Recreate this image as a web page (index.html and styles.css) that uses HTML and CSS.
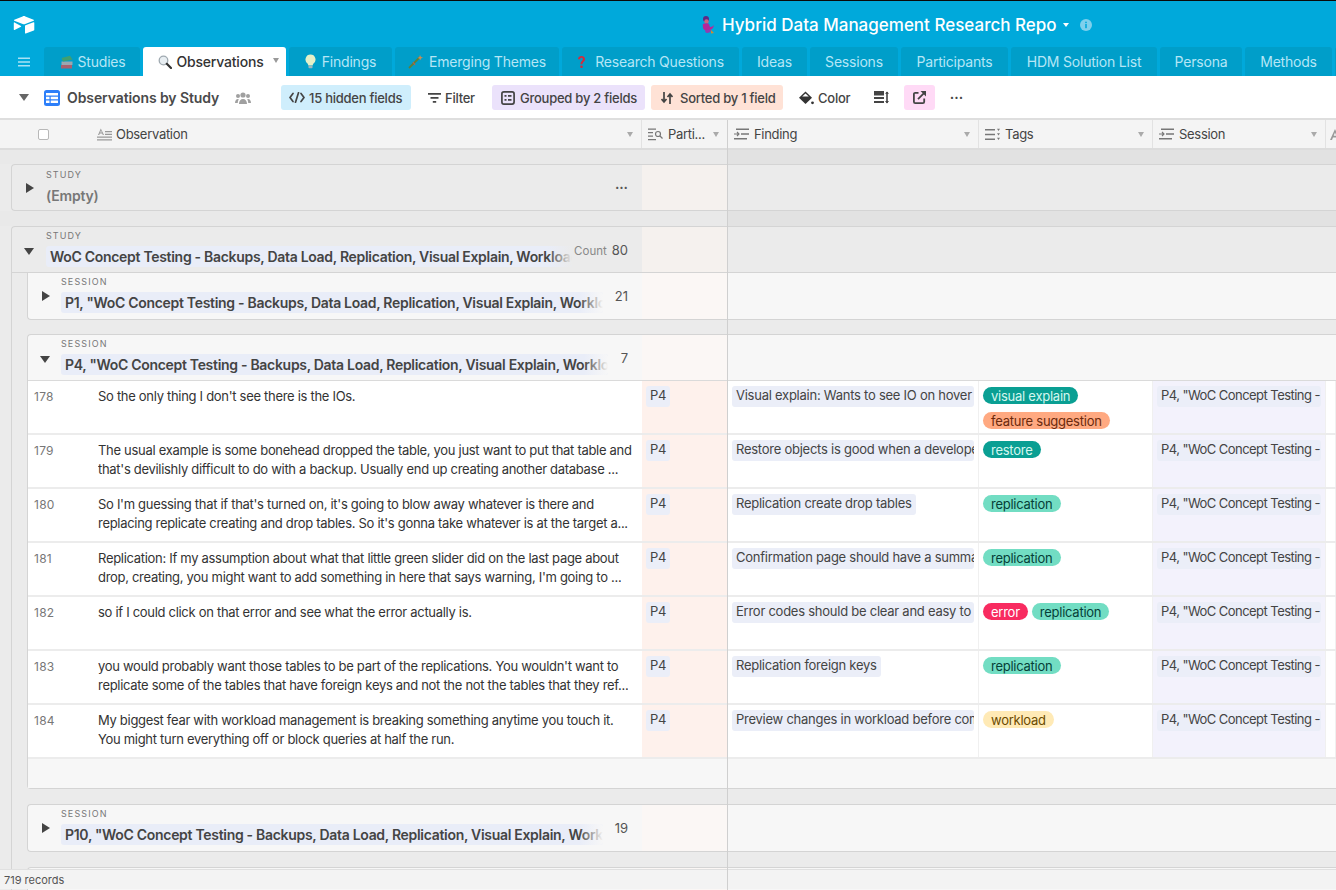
FILE: index.html
```html
<!DOCTYPE html>
<html lang="en">
<head>
<meta charset="utf-8">
<title>Hybrid Data Management Research Repo</title>
<link rel="stylesheet" href="styles.css">
</head>
<body>
<div class="app">
  <header class="topbar">
    <div class="brand">
      <svg class="logo" width="22" height="18" viewBox="0 0 22 18"><path d="M9.6.4 1.3 3.8c-.5.2-.5.8 0 1l8.4 3.3c.8.3 1.7.3 2.5 0l8.4-3.3c.5-.2.5-.8 0-1L12.300.4c-.9-.4-1.800-.4-2.700 0z" fill="#fff"/><path d="M12 10v7c0 .4.400.7.800.5l8-3.100c.3-.1.500-.4.500-.7v-7c0-.4-.400-.7-.800-.5l-8 3.100c-.3.100-.5.400-.5.700z" fill="#fff"/><path d="M.8 6.800v6.600c0 .4.400.6.700.5l6.500-3.200c.3-.2.200-.5 0-.6L1.500 6.400c-.3-.2-.7 0-.7.400z" fill="#fff"/></svg>
      <div class="base-title">
        <svg width="16" height="20" viewBox="0 0 16 20"><circle cx="6" cy="4" r="3" fill="#5b2a86"/><circle cx="6.500" cy="6.500" r="2.200" fill="#c9677f"/><path d="M3 9c2-1 5-1 6 0l1 3c2 0 3-1 4-2-.3 3-2.500 5-5 5H5C3 15 2.400 11 3 9z" fill="#b5279a"/><path d="M5 15h6c0 2-2 3-4 3-1.500 0-2-1.500-2-3z" fill="#8f3fb0"/><path d="M11 15l3 3-3 .5z" fill="#d08a2e"/></svg>
        <span class="base-name">Hybrid Data Management Research Repo</span>
        <span class="caret-white"></span>
        <svg class="info" width="12" height="12" viewBox="0 0 12 12"><circle cx="6" cy="6" r="6" fill="#7fd0ec"/><rect x="5.200" y="5" width="1.600" height="4.200" fill="#00a9db"/><rect x="5.200" y="2.700" width="1.600" height="1.500" fill="#00a9db"/></svg>
      </div>
    </div>
    <nav class="tabs">
      <div class="menu"><svg width="12" height="10" viewBox="0 0 12 10"><path d="M0 .5h12v1.600H0zM0 4.200h12v1.600H0zM0 7.900h12v1.600H0z" fill="#a8e2f5"/></svg></div>
      <div class="tab tab-books"><svg width="14" height="14" viewBox="0 0 14 14"><path d="M1 10h11v3.500H1z" fill="#a8606e"/><path d="M1.500 6.500h11V10h-11z" fill="#9aa7b0"/><path d="M1.500 3 10 .8l2.500 3.700-9.500 2z" fill="#3f9f72"/></svg>Studies</div>
      <div class="tab active"><svg width="14" height="14" viewBox="0 0 14 14"><circle cx="5.500" cy="5.500" r="4.300" fill="#e8eef2" stroke="#9fa9b0" stroke-width="1.300"/><path d="M8.800 8.800 13 13" stroke="#333" stroke-width="2.200" stroke-linecap="round"/></svg>Observations<span class="caret-tab"></span></div>
      <div class="tab"><svg width="11" height="15" viewBox="0 0 11 15"><path d="M5.500.5a5 5 0 0 0-3 9c.5.500.7 1.300.8 2h4.400c.1-.7.300-1.500.8-2a5 5 0 0 0-3-9z" fill="#e4f0c8"/><rect x="3.500" y="11.800" width="4" height="2.500" rx=".8" fill="#9fb6bf"/></svg>Findings</div>
      <div class="tab"><svg width="15" height="15" viewBox="0 0 15 15"><path d="M1 14 12 3" stroke="#5f7f3a" stroke-width="1.800"/><path d="M12 1l1 2 2 .5-2 1-.7 1.800-1-1.800-1.800-.5 1.800-1z" fill="#c98d54"/><path d="M5 8l2 3" stroke="#b8624b" stroke-width="1.200"/></svg>Emerging Themes</div>
      <div class="tab tab-question"><svg width="9" height="14" viewBox="0 0 9 14"><path d="M1 4.200C1 2 2.800 1 4.500 1S8 2.200 8 4.200c0 2.600-2.500 2.600-2.500 5H3.500c0-3.200 2.300-3.300 2.300-5 0-.9-.6-1.400-1.300-1.400s-1.300.5-1.300 1.400z" fill="#d8293a"/><circle cx="4.500" cy="11.800" r="1.300" fill="#d8293a"/></svg>Research Questions</div>
      <div class="tab">Ideas</div>
      <div class="tab">Sessions</div>
      <div class="tab">Participants</div>
      <div class="tab">HDM Solution List</div>
      <div class="tab">Persona</div>
      <div class="tab">Methods</div>
      <div class="tab"></div>
    </nav>
  </header>

  <section class="toolbar">
    <span class="tri-down tool-tri"></span>
    <svg class="grid-icon" width="16" height="16" viewBox="0 0 16 16"><rect width="16" height="16" rx="2.500" fill="#2d7ff9"/><path d="M2 3h12v2.500H2zM2 6.800h3.500v2.500H2zM6.700 6.800H14v2.500H6.700zM2 10.500h3.500V13H2zM6.700 10.500H14V13H6.700z" fill="#fff"/></svg>
    <span class="view-name">Observations by Study</span>
    <svg class="people" width="16" height="12" viewBox="0 0 16 12"><circle cx="8" cy="3" r="2.600" fill="#a0a0a0"/><circle cx="3" cy="4" r="2" fill="#a0a0a0"/><circle cx="13" cy="4" r="2" fill="#a0a0a0"/><path d="M4 12c0-3 1.500-5 4-5s4 2 4 5zM0 11c0-2 1-4 3-4l.800.300C3 8.500 2.800 10 2.800 11zM16 11c0-2-1-4-3-4l-.8.300c.8 1.200 1 2.700 1 3.700z" fill="#a0a0a0"/></svg>
    <div class="tool chip-blue"><svg width="16" height="11" viewBox="0 0 16 11"><path d="M4 1.500 1 5.500l3 4M12 1.500l3 4-3 4M9.500.7 6.500 10.300" fill="none" stroke="#444" stroke-width="1.700" stroke-linecap="round" stroke-linejoin="round"/></svg>15 hidden fields</div>
    <div class="tool tool-filter"><svg width="13" height="10" viewBox="0 0 13 10"><path d="M0 0h13v1.800H0zM2.500 4h8v1.800h-8zM4.800 8h3.400v1.800H4.800z" fill="#444"/></svg>Filter</div>
    <div class="tool chip-purple"><svg width="14" height="14" viewBox="0 0 14 14"><rect x=".9" y=".9" width="12.200" height="12.200" rx="2" fill="none" stroke="#444" stroke-width="1.700"/><path d="M3.500 4h2v1.700h-2zM7 4h3.500v1.700H7zM3.500 8h2v1.700h-2zM7 8h3.500v1.700H7z" fill="#444"/></svg>Grouped by 2 fields</div>
    <div class="tool chip-orange"><svg width="12" height="12" viewBox="0 0 12 12"><path d="M3 0v9M.5 7 3 10 5.500 7M9 12V3M6.500 5 9 2l2.500 3" fill="none" stroke="#444" stroke-width="1.700"/></svg>Sorted by 1 field</div>
    <div class="tool tool-color"><svg width="15" height="14" viewBox="0 0 15 14"><path d="M6.500.5 13 6.800 6.500 13 0 6.800z" fill="#333"/><path d="M3.200 5.600h6.600L6.500 2.400z" fill="#fff"/><circle cx="13.500" cy="11.800" r="1.400" fill="#333"/></svg>Color</div>
    <svg class="row-h" width="15" height="13" viewBox="0 0 15 13"><path d="M0 0h10v4.500H0zM0 6h10v2H0zM0 10h10v2H0z" fill="#444"/><path d="M13 1v11" stroke="#444" stroke-width="1.600"/><path d="M11 2.800 13 .5l2 2.300zM11 10l2 2.500 2-2.500z" fill="#444"/></svg>
    <div class="share"><svg width="13" height="13" viewBox="0 0 13 13"><path d="M5.500 1.800H2.300c-.8 0-1.400.6-1.400 1.400v7.500c0 .8.600 1.400 1.400 1.400h7.500c.8 0 1.400-.6 1.400-1.400V7.500" fill="none" stroke="#444" stroke-width="1.800"/><path d="M5 8.200 11 2.200" stroke="#444" stroke-width="1.800"/><path d="M7.500 0H13v5.500z" fill="#444"/></svg></div>
    <span class="more">•••</span>
  </section>

  <section class="table">
    <div class="col-head">
      <div class="hc hc-first">
        <span class="checkbox"></span>
        <svg class="hc-icon" width="15" height="13" viewBox="0 0 15 13"><path d="M3.800.5 1 7h1.200l.6-1.500h2.400L5.800 7H7zM3.200 4.400 4 2.300l.8 2.100zM8 3h7v1.300H8zM8 5.700h7V7H8zM0 8.500h15v1.300H0zM0 11.200h15v1.300H0z" fill="#999"/></svg>
        <span>Observation</span><span class="caret-grey"></span>
      </div>
      <div class="hc">
        <svg class="hc-icon" width="15" height="13" viewBox="0 0 15 13"><path d="M0 .5h8v1.300H0zM0 4h5v1.300H0zM0 7.500h5v1.300H0zM0 11h8v1.300H0z" fill="#777"/><circle cx="10" cy="6" r="2.500" fill="none" stroke="#777" stroke-width="1.200"/><path d="m12 8 2.500 2.500" stroke="#777" stroke-width="1.300"/></svg>
        <span>Parti...</span><span class="caret-grey"></span>
      </div>
      <div class="hc">
        <svg class="hc-icon" width="15" height="12" viewBox="0 0 15 12"><path d="M2 .5h13v1.400H2zM7 5.300h8v1.400H7zM0 10h13v1.400H0z" fill="#777"/><path d="M0 6h5M3 4l2 2-2 2" fill="none" stroke="#777" stroke-width="1.100"/></svg>
        <span>Finding</span><span class="caret-grey"></span>
      </div>
      <div class="hc">
        <svg class="hc-icon" width="15" height="13" viewBox="0 0 15 13"><path d="M0 1h10v1.400H0zM0 5.800h10v1.400H0zM0 10.600h10V12H0z" fill="#777"/><path d="M12 .7h3L13.500 3zM12 5.200h3L13.500 7.500zM12 9.800h3L13.500 12z" fill="#777"/></svg>
        <span>Tags</span><span class="caret-grey"></span>
      </div>
      <div class="hc">
        <svg class="hc-icon" width="15" height="12" viewBox="0 0 15 12"><path d="M2 .5h13v1.400H2zM7 5.300h8v1.400H7zM0 10h13v1.400H0z" fill="#777"/><path d="M0 6h5M3 4l2 2-2 2" fill="none" stroke="#777" stroke-width="1.100"/></svg>
        <span>Session</span><span class="caret-grey"></span>
      </div>
      <div class="hc hc-last"><svg width="10" height="11" viewBox="0 0 10 11"><path d="M5 0 0 11h2l1-2.500h4L8 11h2zM3.700 6.700 5 3.500l1.300 3.200z" fill="#999"/></svg></div>
    </div>

    <div class="body">
      <div class="gap gap-outer"></div>

      <div class="group study closed">
        <div class="row head">
          <div class="lead">
            <span class="tri-right"></span>
            <div class="head-text">
              <div class="label">STUDY</div>
              <div class="empty">(Empty)</div>
            </div>
            <span class="dots">•••</span>
          </div>
          <div class="c tint"></div><div class="c"></div><div class="c"></div><div class="c"></div><div class="c"></div>
        </div>
      </div>

      <div class="gap gap-outer gap-outer2"></div>

      <div class="group study">
        <div class="row head">
          <div class="lead">
            <span class="tri-down"></span>
            <div class="head-text">
              <div class="label">STUDY</div>
              <div class="value value-study">WoC Concept Testing - Backups, Data Load, Replication, Visual Explain, Workload</div>
            </div>
            <div class="count"><span class="count-label">Count</span>80</div>
          </div>
          <div class="c tint"></div><div class="c"></div><div class="c"></div><div class="c"></div><div class="c"></div>
        </div>

        <div class="group session">
          <div class="row head">
            <div class="lead">
              <span class="tri-right"></span>
              <div class="head-text">
                <div class="label">SESSION</div>
                <div class="value value-p1">P1, "WoC Concept Testing - Backups, Data Load, Replication, Visual Explain, Workload</div>
              </div>
              <div class="count">21</div>
            </div>
            <div class="c tint"></div><div class="c"></div><div class="c"></div><div class="c"></div><div class="c"></div>
          </div>
        </div>

        <div class="gap gap-inner"></div>

        <div class="group session">
          <div class="row head">
            <div class="lead">
              <span class="tri-down"></span>
              <div class="head-text">
                <div class="label">SESSION</div>
                <div class="value value-p4">P4, "WoC Concept Testing - Backups, Data Load, Replication, Visual Explain, Workload</div>
              </div>
              <div class="count">7</div>
            </div>
            <div class="c tint"></div><div class="c"></div><div class="c"></div><div class="c"></div><div class="c"></div>
          </div>

          <div class="row data">
            <div class="lead"><span class="num">178</span><p class="obs">So the only thing I don't see there is the IOs.</p></div>
            <div class="c tint-o"><span class="chip">P4</span></div>
            <div class="c"><span class="chip wide">Visual explain: Wants to see IO on hover /</span></div>
            <div class="c tags"><span class="tag teal">visual explain</span><span class="tag orange">feature suggestion</span></div>
            <div class="c tint-p"><span class="chip wide link-chip">P4, "WoC Concept Testing - Backups</span></div>
            <div class="c"></div>
          </div>
          <div class="row data">
            <div class="lead"><span class="num">179</span><p class="obs">The usual example is some bonehead dropped the table, you just want to put that table and<br>that's devilishly difficult to do with a backup. Usually end up creating another database ...</p></div>
            <div class="c tint-o"><span class="chip">P4</span></div>
            <div class="c"><span class="chip wide">Restore objects is good when a developer</span></div>
            <div class="c tags"><span class="tag teal">restore</span></div>
            <div class="c tint-p"><span class="chip wide link-chip">P4, "WoC Concept Testing - Backups</span></div>
            <div class="c"></div>
          </div>
          <div class="row data">
            <div class="lead"><span class="num">180</span><p class="obs">So I'm guessing that if that's turned on, it's going to blow away whatever is there and<br>replacing replicate creating and drop tables. So it's gonna take whatever is at the target a...</p></div>
            <div class="c tint-o"><span class="chip">P4</span></div>
            <div class="c"><span class="chip">Replication create drop tables</span></div>
            <div class="c tags"><span class="tag mint">replication</span></div>
            <div class="c tint-p"><span class="chip wide link-chip">P4, "WoC Concept Testing - Backups</span></div>
            <div class="c"></div>
          </div>
          <div class="row data">
            <div class="lead"><span class="num">181</span><p class="obs">Replication: If my assumption about what that little green slider did on the last page about<br>drop, creating, you might want to add something in here that says warning, I'm going to ...</p></div>
            <div class="c tint-o"><span class="chip">P4</span></div>
            <div class="c"><span class="chip wide">Confirmation page should have a summary</span></div>
            <div class="c tags"><span class="tag mint">replication</span></div>
            <div class="c tint-p"><span class="chip wide link-chip">P4, "WoC Concept Testing - Backups</span></div>
            <div class="c"></div>
          </div>
          <div class="row data">
            <div class="lead"><span class="num">182</span><p class="obs">so if I could click on that error and see what the error actually is.</p></div>
            <div class="c tint-o"><span class="chip">P4</span></div>
            <div class="c"><span class="chip wide">Error codes should be clear and easy to identify</span></div>
            <div class="c tags"><span class="tag red">error</span><span class="tag mint">replication</span></div>
            <div class="c tint-p"><span class="chip wide link-chip">P4, "WoC Concept Testing - Backups</span></div>
            <div class="c"></div>
          </div>
          <div class="row data">
            <div class="lead"><span class="num">183</span><p class="obs">you would probably want those tables to be part of the replications. You wouldn't want to<br>replicate some of the tables that have foreign keys and not the not the tables that they ref...</p></div>
            <div class="c tint-o"><span class="chip">P4</span></div>
            <div class="c"><span class="chip">Replication foreign keys</span></div>
            <div class="c tags"><span class="tag mint">replication</span></div>
            <div class="c tint-p"><span class="chip wide link-chip">P4, "WoC Concept Testing - Backups</span></div>
            <div class="c"></div>
          </div>
          <div class="row data">
            <div class="lead"><span class="num">184</span><p class="obs">My biggest fear with workload management is breaking something anytime you touch it.<br>You might turn everything off or block queries at half the run.</p></div>
            <div class="c tint-o"><span class="chip">P4</span></div>
            <div class="c"><span class="chip wide">Preview changes in workload before committing</span></div>
            <div class="c tags"><span class="tag yellow">workload</span></div>
            <div class="c tint-p"><span class="chip wide link-chip">P4, "WoC Concept Testing - Backups</span></div>
            <div class="c"></div>
          </div>
          <div class="summary"></div>
        </div>

        <div class="gap gap-inner gap-inner2"></div>

        <div class="group session">
          <div class="row head">
            <div class="lead">
              <span class="tri-right"></span>
              <div class="head-text">
                <div class="label">SESSION</div>
                <div class="value value-p1">P10, "WoC Concept Testing - Backups, Data Load, Replication, Visual Explain, Workload</div>
              </div>
              <div class="count">19</div>
            </div>
            <div class="c tint"></div><div class="c"></div><div class="c"></div><div class="c"></div><div class="c"></div>
          </div>
        </div>

        <div class="gap gap-inner gap-inner2"></div>
        <div class="group session">
          <div class="row head"><div class="lead"></div><div class="c tint"></div><div class="c"></div><div class="c"></div><div class="c"></div><div class="c"></div></div>
        </div>
      </div>
    </div>

    <footer class="status">719 records</footer>
    <div class="freeze-line"></div>
  </section>
</div>
</body>
</html>
```

FILE: styles.css
```css
* { box-sizing: border-box; }
html, body { margin: 0; padding: 0; height: 100%; overflow: hidden; }
body {
  font-family: Inter, "Liberation Sans", sans-serif;
  font-size: 13px;
  color: #333;
  background: #fff;
}
svg { flex: none; }
.app { height: 890px; display: flex; flex-direction: column; }

/* top bar */
.topbar { height: 76px; flex: none; background: #00a9db; border-top: 1px solid #0a0a0a; }
.brand { height: 46px; display: flex; align-items: center; padding: 1px 0 0 13px; }
.logo { flex: none; }
.base-title { display: flex; align-items: center; margin-left: 665px; }
.base-name { margin-left: 6px; font-size: 17px; font-weight: 500; color: #fff; white-space: nowrap; }
.caret-white { margin-left: 6px; border: 3.5px solid transparent; border-top: 4px solid #fff; border-bottom: 0; }
.info { margin-left: 11px; }
.tabs {
  height: 29px;
  display: grid;
  grid-template-columns: 41px 96px 143px 103px 164px 177px 65px 88px 107px 146px 82px 87px 10px;
  column-gap: 3px;
  margin-right: -40px;
}
.menu { display: flex; align-items: center; justify-content: center; margin-right: -3px; padding-left: 3px; }
.tab {
  display: flex;
  align-items: center;
  justify-content: center;
  gap: 6px;
  background: #009ec9;
  color: #b5e6f6;
  font-size: 14px;
  letter-spacing: -.2px;
  border-radius: 3px 3px 0 0;
  white-space: nowrap;
}
.tab-books { gap: 4px; padding-left: 1px; }
.tab-question { gap: 9px; }
.tab.active { background: #fff; color: #333; font-weight: 500; position: relative; gap: 4px; padding-right: 7px; }
.caret-tab {
  position: absolute;
  right: 7px;
  top: 11px;
  border: 3.500px solid transparent;
  border-top: 5px solid #999;
  border-bottom: 0;
}

/* toolbar */
.toolbar {
  height: 44px;
  flex: none;
  display: flex;
  align-items: center;
  background: #fff;
  border-bottom: 2px solid #dedede;
  padding-top: 1px;
  font-size: 13px;
  color: #444;
}
.tri-down { flex: none; width: 0; height: 0; border-left: 5px solid transparent; border-right: 5px solid transparent; border-top: 7px solid #444; }
.tri-right { flex: none; width: 0; height: 0; border-top: 5px solid transparent; border-bottom: 5px solid transparent; border-left: 8px solid #444; }
.tool-tri { margin-left: 19px; border-top-color: #666; }
.grid-icon { margin-left: 15px; }
.view-name { flex: none; width: 152px; margin-left: 7px; font-size: 14px; font-weight: 600; letter-spacing: -.1px; color: #4a4a4a; white-space: nowrap; }
.people { margin-left: 16px; }
.tool { display: flex; flex: none; align-items: center; gap: 4px; height: 25px; border-radius: 3px; white-space: nowrap; font-weight: 500; letter-spacing: -.25px; }
.chip-blue { margin-left: 30px; width: 130px; padding-left: 8px; background: #cfeefc; }
.tool-filter { margin-left: 17px; width: 49px; }
.chip-purple { margin-left: 15px; width: 153px; padding-left: 9px; gap: 5px; background: #ebe2fb; }
.chip-orange { margin-left: 6px; width: 132px; padding-left: 10px; gap: 7px; background: #ffe2d6; }
.tool-color { margin-left: 16px; width: 51px; }
.row-h { margin-left: 24px; }
.share { flex: none; margin-left: 15px; width: 31px; height: 25px; border-radius: 3px; background: #ffdaf6; display: flex; align-items: center; justify-content: center; }
.more { margin-left: 15px; font-size: 7px; letter-spacing: .5px; color: #444; }

/* table */
.table { flex: 1; min-height: 0; position: relative; display: flex; flex-direction: column; background: #ebebeb; }
.col-head {
  height: 30px;
  flex: none;
  display: grid;
  grid-template-columns: 642px 86px 251px 174px 173px 1fr;
  background: #f4f4f4;
  border-bottom: 2px solid #dcdcdc;
}
.hc { display: flex; align-items: center; gap: 5px; padding: 0 8px 0 6px; font-size: 13px; letter-spacing: -.3px; color: #444; border-right: 1px solid #e2e2e2; min-width: 0; white-space: nowrap; }
.hc-first { padding-left: 38px; gap: 4px; }
.hc-last { border-right: 0; padding-left: 4px; }
.checkbox { width: 11px; height: 11px; border: 1px solid #b8b8b8; border-radius: 2px; background: #fff; margin-right: 44px; }
.caret-grey { margin-left: auto; border: 3.500px solid transparent; border-top: 5px solid #aaa; border-bottom: 0; }

.body { flex: 1; min-height: 0; overflow: hidden; }
.gap { height: 14px; }
.gap-outer { background: linear-gradient(90deg, #e9e9e9 728px, #e2e2e2 728px); }
.gap-outer2 { height: 15px; }
.gap-inner { background: #ebebeb; }
.gap-inner2 { height: 15px; }

.group { --lead: 642px; background: #ebebeb; border-top: 1px solid #d4d4d4; border-bottom: 0; }
.study { --lead: 630px; margin-left: 11px; border-left: 1px solid #d4d4d4; border-top-left-radius: 4px; }
.study.closed { border-bottom: 1px solid #d4d4d4; border-bottom-left-radius: 4px; }
.session { --lead: 614px; margin-left: 15px; border-left: 1px solid #d4d4d4; border-bottom: 1px solid #d4d4d4; border-radius: 4px 0 0 4px; background: #f7f7f7; }
.study > .row.head + .session { border-top: 0; border-top-left-radius: 0; }

.row { display: grid; grid-template-columns: var(--lead) 86px 251px 174px 173px 1fr; }
.study > .row.head { height: 46px; border-bottom: 1px solid #d4d4d4; }
.study.closed > .row.head { height: 45px; border-bottom: 0; }
.session > .row.head { height: 46px; }
.session > .row.head:not(:last-child) { border-bottom: 1px solid #dadada; }
.lead { display: flex; min-width: 0; position: relative; align-items: flex-start; }

.study > .row.head .lead { padding-left: 14px; }
.session > .row.head .lead { padding-left: 14px; }
.head .tri-right { margin-top: 18px; }
.head .tri-down { margin-top: 21px; }
.study > .row.head .tri-down { margin-left: -2px; }
.session > .row.head .tri-down { margin-left: -2px; }
.head-text { margin-left: 12px; min-width: 0; flex: none; padding-top: 3px; }
.closed .head-text { padding-top: 4px; }
.session .head-text { margin-left: 11px; }
.study .head-text { width: 530px; }
.label { font-size: 9px; line-height: 11px; letter-spacing: 1.100px; color: #777; }
.empty { margin-top: 6px; font-size: 14px; line-height: 20px; font-weight: 600; letter-spacing: -.2px; color: #777; }
.dots { position: absolute; right: 14px; top: 18px; font-size: 7px; letter-spacing: .3px; color: #555; }
.value {
  position: relative;
  margin-top: 5px;
  height: 21px;
  line-height: 21px;
  padding-left: 4px;
  font-size: 14px;
  font-weight: 600;
  letter-spacing: -.3px;
  color: #444;
  background: #e9edf8;
  border-radius: 3px;
  white-space: nowrap;
  overflow: hidden;
}
.value::after { content: ""; position: absolute; right: 0; top: 0; bottom: 0; width: 24px; background: linear-gradient(90deg, rgba(247,247,247,0), #f7f7f7); }
.value-study { width: 526px; }
.value-study::after { background: linear-gradient(90deg, rgba(235,235,235,0), #ebebeb); }
.value-p1 { width: 542px; }
.value-p4 { width: 547px; }
.count { position: absolute; right: 14px; top: 13px; font-size: 13px; color: #555; line-height: 20px; }
.count-label { font-size: 11.500px; color: #888; margin-right: 5px; }

.c { min-width: 0; }
.study > .row.head .tint { background: #f5f1ee; }
.session > .row.head .tint { background: #fbf7f5; }
.row.data { height: 54px; background: #fff; border-bottom: 2px solid #ececec; letter-spacing: -.25px; }
.row.data .c { padding: 5px 4px 0; overflow: hidden; border-right: 1px solid #f0f0f0; }
.tint-o { background: #fef1ec; }
.tint-p { background: #f3f2fc; }
.row.data .lead { padding: 6px 2px 0 6px; }
.num { flex: none; width: 64px; font-size: 12px; letter-spacing: .25px; line-height: 19px; color: #777; }
.obs {
  margin: 0;
  font-size: 13px;
  line-height: 19px;
  letter-spacing: -.3px;
  color: #333;
  white-space: nowrap;
  overflow: hidden;
}
.chip {
  display: inline-block;
  height: 21px;
  line-height: 19px;
  max-width: 100%;
  padding: 0 4px;
  border-radius: 3px;
  background: #ebeef8;
  color: #444;
  white-space: nowrap;
  overflow: hidden;
  vertical-align: top;
}
.chip.wide { display: block; width: 100%; }
.link-chip { letter-spacing: -.55px; }
.tags { display: flex; flex-wrap: wrap; align-content: flex-start; gap: 8px 4px; padding-top: 6px !important; }
.tag { height: 17px; line-height: 18px; padding: 0 8px; border-radius: 9px; white-space: nowrap; }
.teal { background: #0a9f93; color: #d5f7ef; }
.orange { background: #ffa981; color: #6b2a0d; }
.mint { background: #72ddc3; color: #063f38; }
.red { background: #f82b60; color: #fff; }
.yellow { background: #ffeab6; color: #6b4a00; }
.summary { height: 29px; background: #f7f7f7; }

.status { position: absolute; left: 0; right: 0; bottom: 1px; height: 20px; padding-left: 4px; line-height: 21px; font-size: 11px; color: #555; background: rgba(243,243,243,.96); border-top: 1px solid #e0e0e0; }
.freeze-line { position: absolute; left: 727px; top: 0; bottom: 0; width: 1px; background: #cfcfcf; }
```
